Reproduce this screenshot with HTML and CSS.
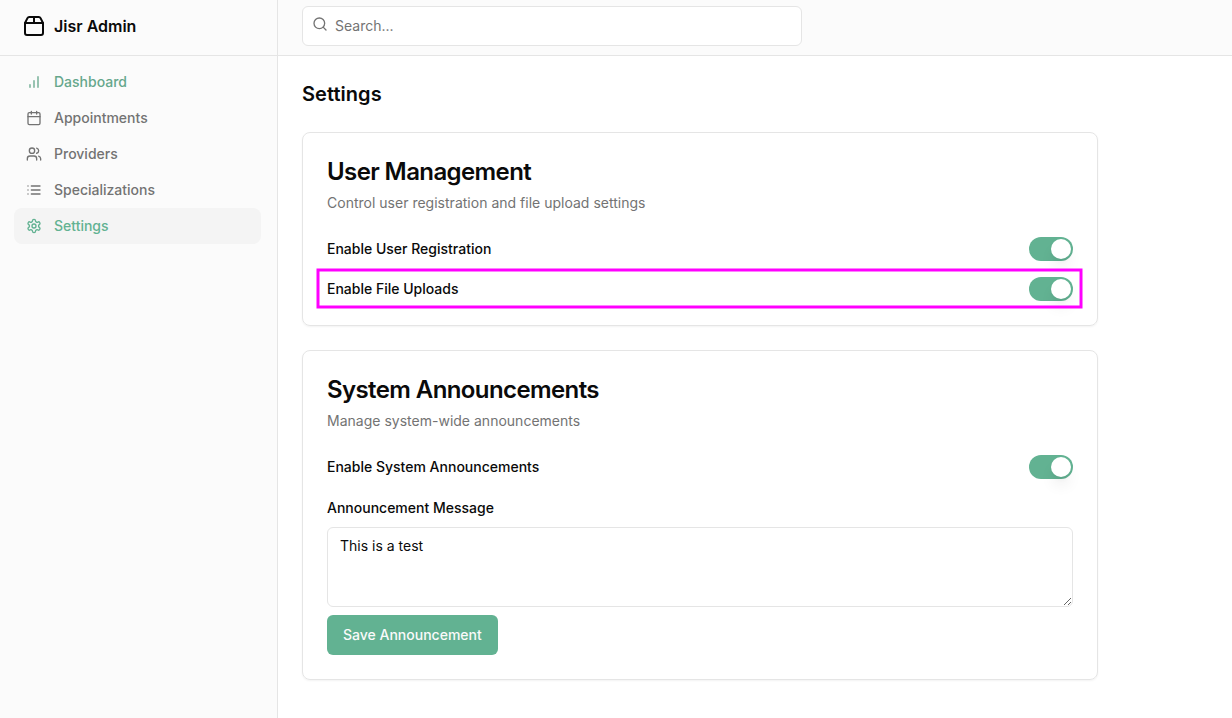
FILE: index.html
```html
<!DOCTYPE html>
<html lang="en">
<head>
<meta charset="utf-8">
<title>Jisr Admin</title>
<link rel="stylesheet" href="styles.css">
</head>
<body>
<div class="app">
  <aside class="sidebar">
    <div class="brand">
      <svg class="icon brand-icon" viewBox="0 0 24 24"><path d="M3 9h18v10a2 2 0 0 1-2 2H5a2 2 0 0 1-2-2V9Z"/><path d="m3 9 2.45-4.9A2 2 0 0 1 7.24 3h9.52a2 2 0 0 1 1.8 1.1L21 9"/><path d="M12 3v6"/></svg>
      <span>Jisr Admin</span>
    </div>
    <nav class="nav">
      <a class="nav-item visited"><svg class="icon" viewBox="0 0 24 24"><path d="M12 20V10M18 20V4M6 20v-4"/></svg>Dashboard</a>
      <a class="nav-item"><svg class="icon" viewBox="0 0 24 24"><path d="M8 2v4M16 2v4"/><rect width="18" height="18" x="3" y="4" rx="2"/><path d="M3 10h18"/></svg>Appointments</a>
      <a class="nav-item"><svg class="icon" viewBox="0 0 24 24"><path d="M16 21v-2a4 4 0 0 0-4-4H6a4 4 0 0 0-4 4v2"/><circle cx="9" cy="7" r="4"/><path d="M22 21v-2a4 4 0 0 0-3-3.87M16 3.13a4 4 0 0 1 0 7.75"/></svg>Providers</a>
      <a class="nav-item"><svg class="icon" viewBox="0 0 24 24"><path d="M8 6h13M8 12h13M8 18h13M3 6h.01M3 12h.01M3 18h.01"/></svg>Specializations</a>
      <a class="nav-item active"><svg class="icon" viewBox="0 0 24 24"><path d="M12.22 2h-.44a2 2 0 0 0-2 2v.18a2 2 0 0 1-1 1.73l-.43.25a2 2 0 0 1-2 0l-.15-.08a2 2 0 0 0-2.73.73l-.22.38a2 2 0 0 0 .73 2.73l.15.1a2 2 0 0 1 1 1.72v.51a2 2 0 0 1-1 1.74l-.15.09a2 2 0 0 0-.73 2.73l.22.38a2 2 0 0 0 2.73.73l.15-.08a2 2 0 0 1 2 0l.43.25a2 2 0 0 1 1 1.73V20a2 2 0 0 0 2 2h.44a2 2 0 0 0 2-2v-.18a2 2 0 0 1 1-1.73l.43-.25a2 2 0 0 1 2 0l.15.08a2 2 0 0 0 2.73-.73l.22-.39a2 2 0 0 0-.73-2.73l-.15-.08a2 2 0 0 1-1-1.74v-.5a2 2 0 0 1 1-1.74l.15-.09a2 2 0 0 0 .73-2.73l-.22-.38a2 2 0 0 0-2.73-.73l-.15.08a2 2 0 0 1-2 0l-.43-.25a2 2 0 0 1-1-1.73V4a2 2 0 0 0-2-2z"/><circle cx="12" cy="12" r="3"/></svg>Settings</a>
    </nav>
  </aside>
  <div class="page">
    <header class="topbar">
      <label class="search">
        <svg class="icon" viewBox="0 0 24 24"><circle cx="11" cy="11" r="8"/><path d="m21 21-4.3-4.3"/></svg>
        <input class="search-input" type="search" placeholder="Search...">
      </label>
    </header>
    <main class="content">
      <h1 class="page-title">Settings</h1>
      <section class="card">
        <h2 class="card-title">User Management</h2>
        <p class="card-desc">Control user registration and file upload settings</p>
        <div class="row"><span class="label">Enable User Registration</span><span class="switch"><span class="thumb"></span></span></div>
        <div class="row highlighted"><span class="label">Enable File Uploads</span><span class="switch"><span class="thumb"></span></span>
          <svg class="highlight" viewBox="0 0 767 41"><rect x="2" y="2" width="763" height="37"/></svg>
        </div>
      </section>
      <section class="card">
        <h2 class="card-title">System Announcements</h2>
        <p class="card-desc">Manage system-wide announcements</p>
        <div class="row"><span class="label">Enable System Announcements</span><span class="switch"><span class="thumb"></span></span></div>
        <label class="label message-label" for="message">Announcement Message</label>
        <textarea class="message" id="message">This is a test</textarea>
        <button class="save">Save Announcement</button>
      </section>
    </main>
  </div>
</div>
</body>
</html>
```

FILE: styles.css
```css
* { box-sizing: border-box; }
body {
  margin: 0;
  font-family: Inter, sans-serif;
  font-size: 14px;
  line-height: 20px;
  color: #0a0a0a;
  background: #fff;
}
.app { display: flex; height: 718px; overflow: hidden; }
.icon {
  width: 16px;
  height: 16px;
  flex: none;
  fill: none;
  stroke: currentColor;
  stroke-width: 2;
  stroke-linecap: round;
  stroke-linejoin: round;
}
.sidebar {
  width: 278px;
  flex: none;
  background: #fbfbfb;
  border-right: 1px solid #e5e5e5;
}
.brand {
  display: flex;
  align-items: center;
  gap: 8px;
  height: 56px;
  padding: 0 22px 3px;
  border-bottom: 1px solid #e5e5e5;
  font-size: 16px;
  font-weight: 600;
  line-height: 24px;
}
.brand-icon { width: 24px; height: 24px; }
.nav { padding: 8px 16px 0 14px; }
.nav-item {
  display: flex;
  align-items: center;
  gap: 12px;
  height: 36px;
  padding: 0 12px;
  border-radius: 8px;
  font-weight: 500;
  color: #737373;
}
.visited { color: #66a78c; }
.active { color: #62b292; background: #f4f4f4; }
.page { flex: 1; }
.topbar {
  height: 56px;
  padding: 6px 24px 0;
  background: #fbfbfb;
  border-bottom: 1px solid #e5e5e5;
}
.search {
  display: flex;
  gap: 7px;
  width: 500px;
  height: 40px;
  padding: 0 9px;
  background: #fff;
  border: 1px solid #e5e5e5;
  border-radius: 6px;
  color: #737373;
}
.search .icon { margin-top: 9px; }
.search-input {
  flex: 1;
  padding: 0;
  border: 0;
  outline: 0;
  background: none;
  font: inherit;
}
.search-input::placeholder { color: #737373; }
.content { width: 844px; padding: 24px; }
.page-title {
  margin: 0 0 24px;
  font-size: 20px;
  line-height: 28px;
  font-weight: 600;
  letter-spacing: .05px;
}
.card {
  margin-bottom: 24px;
  padding: 24px;
  border: 1px solid #e5e5e5;
  border-radius: 8px;
  box-shadow: 0 1px 2px rgba(0, 0, 0, .05);
}
.card-title {
  margin: 0 0 6px;
  font-size: 24px;
  line-height: 30px;
  font-weight: 600;
  letter-spacing: -.6px;
}
.card-desc { margin: 0 0 24px; color: #737373; letter-spacing: .01px; }
.row { display: flex; align-items: center; justify-content: space-between; height: 24px; }
.highlighted { position: relative; margin-top: 16px; }
.highlight {
  position: absolute;
  left: -11px;
  top: -9px;
  width: 767px;
  height: 41px;
  fill: none;
  stroke: #f0f;
  stroke-width: 3;
}
.label { font-weight: 500; }
.switch {
  display: flex;
  justify-content: flex-end;
  width: 44px;
  padding: 2px;
  border-radius: 12px;
  background: #62b292;
}
.thumb {
  width: 20px;
  height: 20px;
  border-radius: 50%;
  background: #fff;
  box-shadow: 0 10px 15px -3px rgba(0, 0, 0, .1), 0 4px 6px -4px rgba(0, 0, 0, .1);
}
.message-label { display: block; margin: 19px 0 9px; }
.message {
  display: block;
  width: 100%;
  height: 80px;
  margin-bottom: 8px;
  padding: 8px 12px;
  border: 1px solid #e5e5e5;
  border-radius: 6px;
  background: #fff;
  color: inherit;
  font: inherit;
  resize: vertical;
}
.save {
  display: block;
  height: 40px;
  padding: 0 16px;
  border: 0;
  border-radius: 6px;
  background: #62b292;
  color: #fafafa;
  font: inherit;
  font-weight: 500;
}
```
